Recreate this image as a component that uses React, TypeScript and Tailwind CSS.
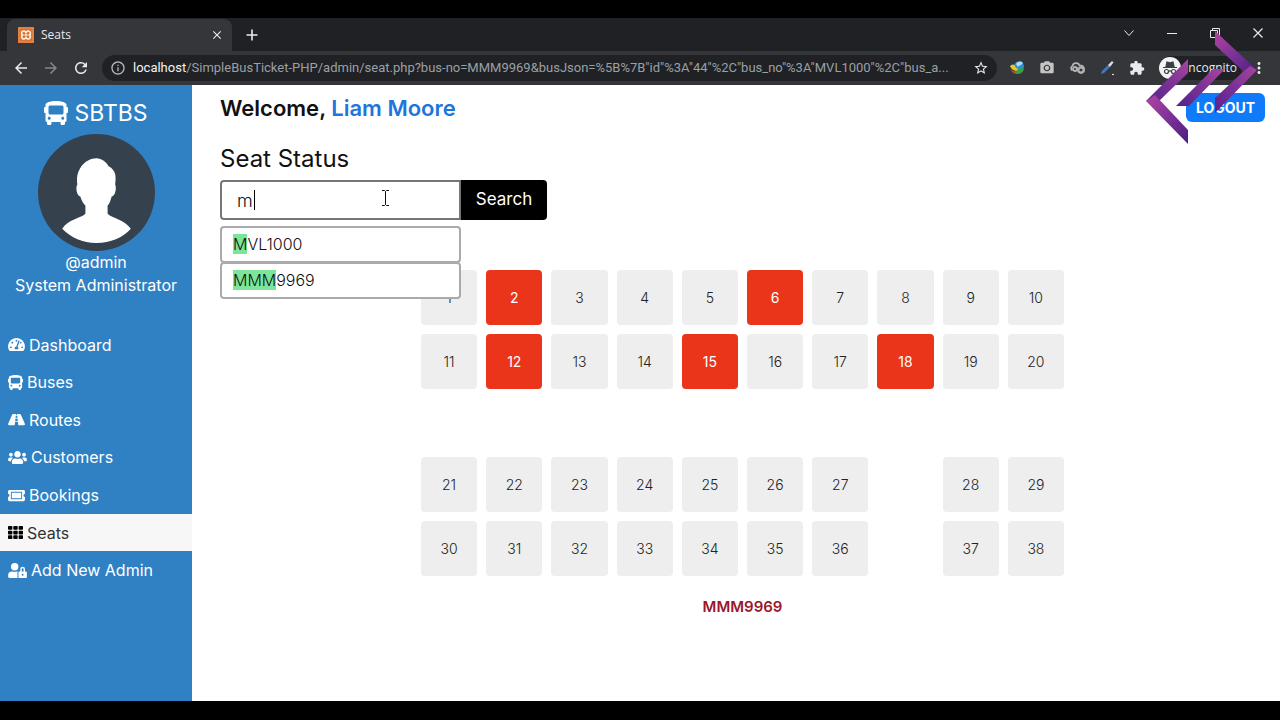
import { useState } from 'react';
import { FaBus, FaRoad, FaTachometerAlt, FaTh, FaTicketAlt, FaUserLock, FaUsers } from 'react-icons/fa';
import {
  MdArrowBack,
  MdArrowForward,
  MdCameraAlt,
  MdClose,
  MdExtension,
  MdInfoOutline,
  MdMoreVert,
  MdRefresh,
  MdStarOutline,
} from 'react-icons/md';

const navItems = [
  { label: 'Dashboard', icon: FaTachometerAlt, size: 'w-[17px]' },
  { label: 'Buses', icon: FaBus, size: 'w-[15px]' },
  { label: 'Routes', icon: FaRoad, size: 'w-[17px]' },
  { label: 'Customers', icon: FaUsers, size: 'w-[19px]' },
  { label: 'Bookings', icon: FaTicketAlt, size: 'w-[17px]' },
  { label: 'Seats', icon: FaTh, size: 'w-[15px]' },
  { label: 'Add New Admin', icon: FaUserLock, size: 'w-[19px]' },
];

const upperRows = [
  [1, 2, 3, 4, 5, 6, 7, 8, 9, 10],
  [11, 12, 13, 14, 15, 16, 17, 18, 19, 20],
];

// null leaves the gap in front of the door
const lowerRows = [
  [21, 22, 23, 24, 25, 26, 27, null, 28, 29],
  [30, 31, 32, 33, 34, 35, 36, null, 37, 38],
];

const booked = [2, 6, 12, 15, 18];

const suggestions = [
  { match: 'M', rest: 'VL1000' },
  { match: 'MMM', rest: '9969' },
];

function TabStrip() {
  return (
    <div className="flex h-[33px] items-stretch bg-[#202124] pl-[7px] text-[#e8eaed]">
      <div className="mt-px flex w-[225px] items-center rounded-t-lg bg-[#35363a] pr-2 pl-[11px]">
        <svg viewBox="0 0 16 16" className="size-4">
          <rect width="16" height="16" fill="#dc7331" />
          <rect x="1" y="1" width="14" height="14" fill="none" stroke="#f0a878" strokeWidth="0.5" />
          <path
            d="M8 6.5V5.8A2.2 2.2 0 1 0 4.600 8 A2.200 2.200 0 1 0 8 10.200V9.500M8 6.500V5.800A2.200 2.200 0 1 1 11.400 8 A2.200 2.200 0 1 1 8 10.200V9.500M6.500 8h3"
            fill="none"
            stroke="#fff3e6"
            strokeWidth="1.6"
          />
        </svg>
        <span className="ml-[7px] flex-1 text-xs">Seats</span>
        <button aria-label="Close tab">
          <MdClose className="size-[14px]" />
        </button>
      </div>
      <button aria-label="New tab" className="ml-3 flex items-center">
        <svg viewBox="0 0 16 16" className="size-4" stroke="currentColor" strokeWidth="1.6">
          <path d="M8 2.5v11M2.5 8h11" />
        </svg>
      </button>
      <div className="ml-auto flex items-center gap-[31px] pr-4 pb-1">
        <button aria-label="Search tabs">
          <svg viewBox="0 0 12 12" className="size-3" fill="none" stroke="currentColor">
            <path d="M1.5 3.5 6 8.5l4.5-5" />
          </svg>
        </button>
        <button aria-label="Minimize">
          <svg viewBox="0 0 12 12" className="size-3" fill="none" stroke="currentColor">
            <path d="M1 6.5h10" />
          </svg>
        </button>
        <button aria-label="Restore">
          <svg viewBox="0 0 12 12" className="size-3" fill="none" stroke="currentColor">
            <path d="M1.5 3.5h7v7h-7zM3.5 3.5v-2h7v7h-2" />
          </svg>
        </button>
        <button aria-label="Close">
          <svg viewBox="0 0 12 12" className="size-3" fill="none" stroke="currentColor" strokeWidth="1.2">
            <path d="M1.5 1.5l9 9M10.5 1.5l-9 9" />
          </svg>
        </button>
      </div>
    </div>
  );
}

function Toolbar() {
  return (
    <div className="flex h-[34px] items-center bg-[#35363a] px-3 text-[#e8eaed]">
      <div className="flex gap-3">
        <button aria-label="Back">
          <MdArrowBack className="size-[18px]" />
        </button>
        <button aria-label="Forward" className="text-[#85878a]">
          <MdArrowForward className="size-[18px]" />
        </button>
        <button aria-label="Reload">
          <MdRefresh className="size-[18px]" />
        </button>
      </div>
      <div className="ml-3 flex h-[26px] min-w-0 flex-1 items-center rounded-full bg-[#202124] px-2">
        <MdInfoOutline className="size-4 shrink-0 text-[#b5b7ba]" />
        <span className="ml-[7px] flex-1 truncate font-['Roboto',sans-serif] text-[13px] text-[#9aa0a6]">
          <span className="text-[#f1f3f4]">localhost</span>
          /SimpleBusTicket-PHP/admin/seat.php?bus-no=MMM9969&amp;busJson=%5B%7B"id"%3A"44"%2C"bus_no"%3A"MVL1000"%2C"bus_a...
        </span>
        <button aria-label="Bookmark this page" className="ml-3">
          <MdStarOutline className="size-4" />
        </button>
      </div>
      <div className="ml-3 flex items-center gap-[14px]">
        <button aria-label="Download manager">
          <svg viewBox="0 0 16 16" className="size-4">
            <circle cx="10" cy="6.5" r="5" fill="#2f8fd8" />
            <path d="M7 4c2-3 5-3 7-1-2 3-4 2-5 4z" fill="#9fe0f5" />
            <path d="M1 6c2-2 4-2 5 0l1 2 3 1-1 2C5 11 2 9 1 6z" fill="#e8c52e" />
            <path d="M3 11c3 1 5 0 7-3l5 1c-1 4-4 5-7 5-2 0-4-1-5-3z" fill="#38a33c" />
            <path d="M2 9c1 2 3 3 5 3l-1 1c-2 0-4-1-4-4z" fill="#d9402a" />
          </svg>
        </button>
        <button aria-label="Screenshot" className="text-[#c4c4c4]">
          <MdCameraAlt className="size-4" />
        </button>
        <button aria-label="Link grabber">
          <svg viewBox="0 0 16 16" className="size-4" fill="none" stroke="#b4b4b4" strokeWidth="1.8">
            <path d="M3.5 10.5a2.500 2.500 0 0 1 0-4.500C4 2.500 9.500 2 10.500 5.500c3 0 4.500 2 4.500 4a3 3 0 0 1-6 .5l-2-2.500" />
            <circle cx="6" cy="9" r="2" />
            <circle cx="12" cy="10" r="2.5" />
          </svg>
        </button>
        <button aria-label="Color picker">
          <svg viewBox="0 0 16 16" className="size-4">
            <path d="M2 14l1-3 6-6 2 2-6 6z" fill="#4676c8" />
            <path d="M9 5l4-4 1.5 1.5L11 7z" fill="#d9dce2" />
            <path d="M13 14h2v1h-2z" fill="#e8eaed" />
          </svg>
        </button>
        <button aria-label="Extensions">
          <MdExtension className="size-4" />
        </button>
        <div className="flex h-6 w-[83px] items-center rounded-full bg-[#202124]">
          <svg viewBox="0 0 22 22" className="size-[22px] shrink-0">
            <circle cx="11" cy="11" r="11" fill="#f1f3f4" />
            <path d="M4 10.5h14M7 9.5 8 5l3 .8L14 5l1 4.5z" fill="#3c4043" stroke="#3c4043" strokeWidth="1.2" />
            <g fill="none" stroke="#3c4043" strokeWidth="1.2">
              <circle cx="7.5" cy="14.5" r="2" />
              <circle cx="14.5" cy="14.5" r="2" />
              <path d="M9.5 14.2q1.5-.8 3 0" />
            </g>
          </svg>
          <span className="ml-1 text-xs">Incognito</span>
        </div>
      </div>
      <button aria-label="Menu" className="ml-2">
        <MdMoreVert className="size-[18px]" />
      </button>
    </div>
  );
}

function Watermark() {
  return (
    <svg viewBox="0 -2 114 114" className="pointer-events-none absolute top-[30px] right-[21px] size-[114px]">
      <defs>
        <linearGradient id="up" x1="0" y1="1" x2="1" y2="0">
          <stop offset="0" stopColor="#54238a" />
          <stop offset="0.5" stopColor="#7c3296" />
          <stop offset="1" stopColor="#a8449c" />
        </linearGradient>
        <linearGradient id="down" x1="0" y1="0" x2="1" y2="1">
          <stop offset="0" stopColor="#b2449e" />
          <stop offset="0.5" stopColor="#7d3298" />
          <stop offset="1" stopColor="#4b1f82" />
        </linearGradient>
      </defs>
      <path d="M43 27v14L14 69H1z" fill="url(#up)" />
      <path d="M1 69l9-6 33 35v14z" fill="url(#down)" />
      <path d="M80 37L44 74H31l37-37z" fill="url(#up)" />
      <path d="M70-1l42 39-10 3-3-1-29-27z" fill="url(#down)" />
      <path d="M105 34l7 4-42 43V66l29-27z" fill="url(#up)" />
    </svg>
  );
}

function Sidebar() {
  return (
    <aside className="w-[192px] shrink-0 bg-[#3080c4] text-white">
      <div className="flex flex-col items-center pt-3">
        <h1 className="flex items-center gap-[6px] text-[23px] leading-8">
          <FaBus className="size-6" />
          SBTBS
        </h1>
        <svg viewBox="0 0 116 116" className="mt-[5px] size-[117px]" role="img" aria-label="Profile picture">
          <circle cx="58" cy="58" r="58" fill="#35424d" />
          <path
            d="M58 24c-6 0-11 3-15 8-4 6-5 11-4 18-2 3-.5 11 3 12 1 4 3 7 5 9v8c-5 5-17 5-23 15 9 9 20 14 34 14s26-5 34-14c-7-10-18-10-23-15v-8c2-2 3-5 4-9 4-1 5-9 3.5-12 1-8 1-14-6.500-18-2-4-7-8-12-8z"
            fill="#fff"
          />
        </svg>
        <p className="text-base leading-[23px]">@admin</p>
        <p className="text-base leading-[23px]">System Administrator</p>
      </div>
      <nav className="mt-[29px] grid h-[263px] auto-rows-fr text-base">
        {navItems.map(({ label, icon: Icon, size }) => (
          <a
            key={label}
            href="#"
            className={`flex items-center gap-1 px-2 ${label === 'Seats' ? 'bg-[#f7f7f7] text-[#333]' : ''}`}
          >
            <Icon className={`h-[15px] ${size} ${label === 'Seats' ? 'text-black' : ''}`} />
            {label}
          </a>
        ))}
      </nav>
    </aside>
  );
}

function SeatRows({ rows }: { rows: (number | null)[][] }) {
  return (
    <div className="grid grid-cols-10 gap-[9px]">
      {rows.flat().map((seat, idx) =>
        seat === null ? (
          <span key={`gap-${idx}`} />
        ) : (
          <button
            key={seat}
            className={`h-[55px] rounded text-sm ${
              booked.includes(seat) ? 'bg-[#ea351a] text-white' : 'bg-[#eee] font-light text-[#222]'
            }`}
          >
            {seat}
          </button>
        )
      )}
    </div>
  );
}

export default function App() {
  const [query, setQuery] = useState('m');

  return (
    <div className="relative flex min-h-screen flex-col bg-black pt-[18px] pb-[19px] font-['Open_Sans',sans-serif]">
      <TabStrip />
      <Toolbar />
      <div className="flex flex-1 bg-white font-['Inter',sans-serif]">
        <Sidebar />
        <main className="min-w-0 flex-1 pt-2 pr-[15px] pl-7 text-[#111]">
          <header className="flex items-start justify-between">
            <h2 className="text-[22px] leading-[30px] font-semibold">
              Welcome, <span className="text-[#1f75dc]">Liam Moore</span>
            </h2>
            <button className="h-[29px] w-[79px] rounded-md bg-[#0f7bfb] text-sm font-bold text-white">LOGOUT</button>
          </header>

          <section className="mt-5">
            <h3 className="text-2xl leading-8">Seat Status</h3>
            <div className="relative mt-[5px]">
              <form className="flex h-10" onSubmit={(e) => e.preventDefault()}>
                <div className="relative w-[241px]">
                  <input
                    aria-label="Bus number"
                    value={query}
                    onChange={(e) => setQuery(e.target.value)}
                    className="h-full w-full rounded-l border-2 border-[#767676] px-[15px] text-lg font-light outline-none"
                  />
                  <span className="absolute top-[10px] left-[34px] h-5 w-px bg-black" />
                  <svg viewBox="0 0 9 16" className="absolute top-[10px] left-[161px] h-4 w-[9px]" fill="none" stroke="#111">
                    <path d="M1 .5h2.5l1 1 1-1H8M4.5 1.5v13M1 15.5h2.5l1-1 1 1H8" />
                  </svg>
                </div>
                <button className="w-[86px] rounded-r bg-black text-[17px] text-white">Search</button>
              </form>
              <ul className="absolute top-[46px] left-0 w-[241px] text-base font-light">
                {suggestions.map((item) => (
                  <li key={item.rest} className="-mb-px h-[37px] rounded border-2 border-[#aaa] bg-white px-[11px] leading-8">
                    <mark className="bg-[#7be69a] text-inherit">{item.match}</mark>
                    {item.rest}
                  </li>
                ))}
              </ul>
            </div>
          </section>

          <section className="mx-auto mt-[50px] flex max-w-[643px] flex-col gap-[68px]">
            <SeatRows rows={upperRows} />
            <SeatRows rows={lowerRows} />
          </section>
          <p className="mt-[19px] text-center text-[15px] leading-6 font-semibold text-[#99172b]">MMM9969</p>
        </main>
      </div>
      <Watermark />
    </div>
  );
}
